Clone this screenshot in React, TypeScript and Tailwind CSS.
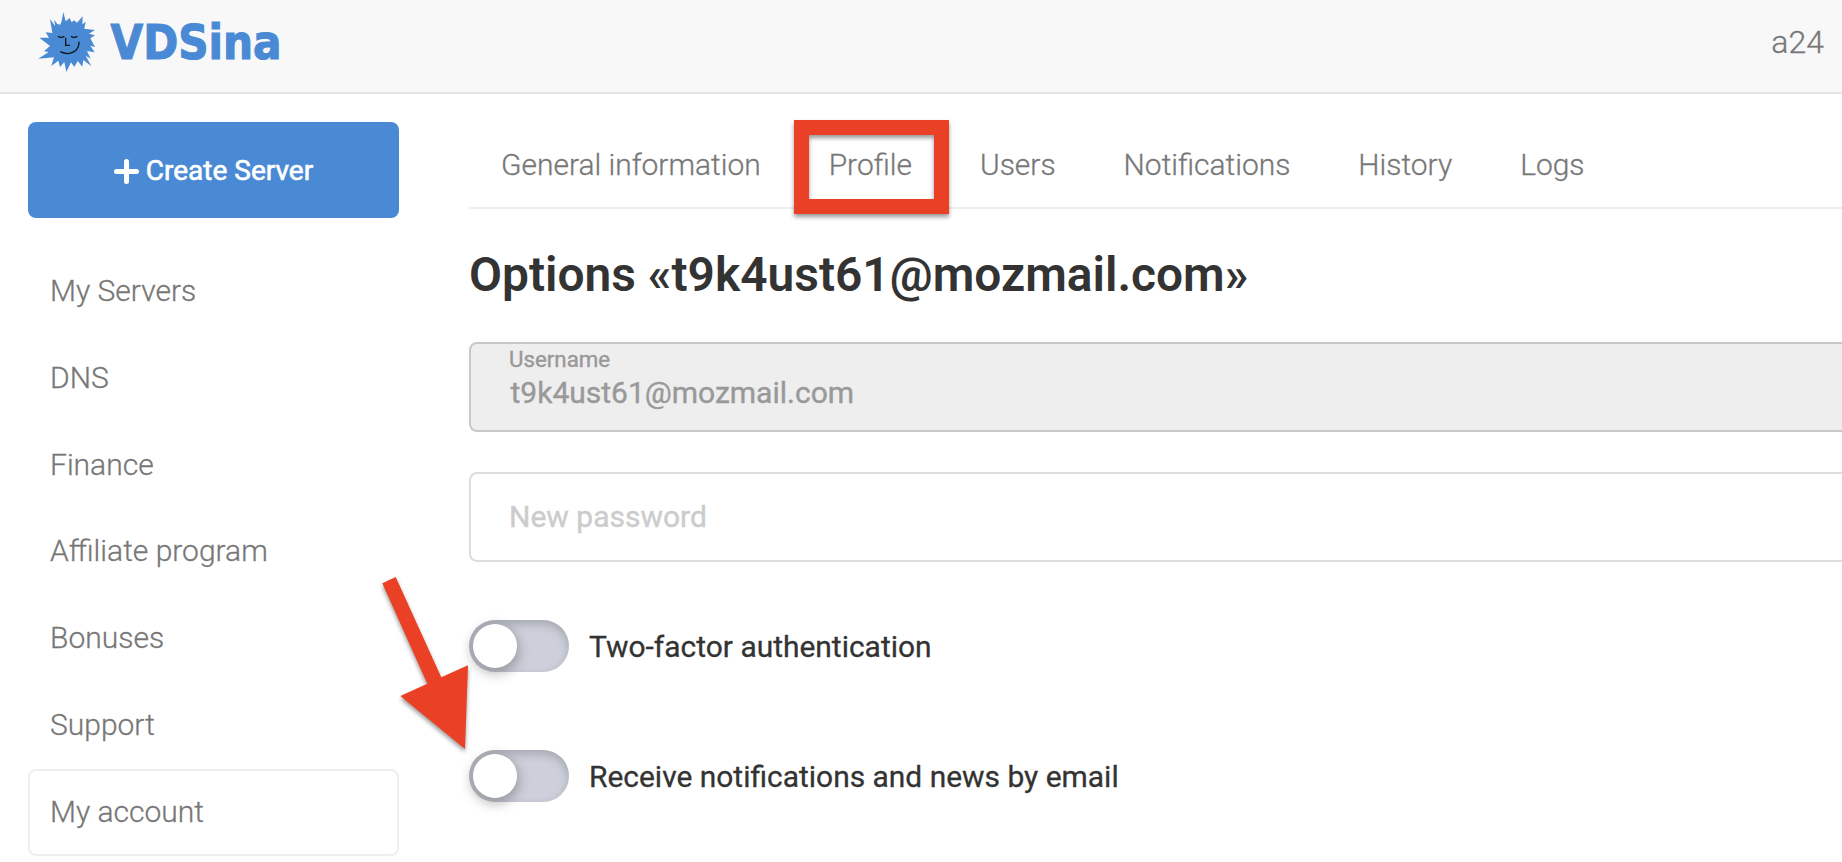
const navItems = ["My Servers", "DNS", "Finance", "Affiliate program", "Bonuses", "Support", "My account"];
const tabs = ["General information", "Profile", "Users", "Notifications", "History", "Logs"];

function Logo() {
  return (
    <svg width="320" height="80" viewBox="0 0 320 80" className="block shrink-0 overflow-visible">
      <g transform="scale(0.33333)">
        <path
          fill="#4a8ad4"
          d="M100 21 L107 49 L119 39 L125 52 L132 46 L141 53 L158 34 L157 58 L167 50 L163 71 L195 75 L177 86 L195 91 L181 100 L195 126 L181 122 L194 142 L171 138 L182 161 L167 152 L184 184 L160 165 L157 185 L143 168 L133 186 L123 172 L109 201 L103 171 L90 186 L85 167 L64 183 L72 157 L25 161 L56 141 L42 139 L60 123 L28 98 L57 98 L47 82 L67 84 L60 42 L76 64 L72 44 L82 57 L91 59 L95 48 Z"
        />
        <g fill="none" stroke="#10151c" strokeWidth="4">
          <path d="M84 94 q9 6 19 0" />
          <path d="M123 94 q9 6 19 0" />
          <path d="M107 98 v23 h13" />
          <path d="M91 140 C118 154 148 140 147 110" />
        </g>
      </g>
      <text
        x="80.5"
        y="54.2"
        textLength="171"
        lengthAdjust="spacingAndGlyphs"
        fill="#4a8ad4"
        stroke="#4a8ad4"
        strokeWidth="1.2"
        className="font-['DejaVu_Sans',sans-serif] text-[48.5px] font-bold"
      >
        VDSina
      </text>
    </svg>
  );
}

function Toggle({ label }: { label: string }) {
  return (
    <label className="flex h-[52px] items-center gap-5">
      <span className="flex h-[52px] w-[100px] items-center rounded-full bg-[#cdd0da] pl-1 shadow-[inset_0_4px_10px_rgba(0,0,0,0.2)]">
        <span className="size-11 rounded-full bg-white shadow-[0_4px_12px_2px_rgba(0,0,0,0.26)]" />
      </span>
      <span className="pt-0.5 text-[29.95px] leading-none whitespace-nowrap text-[#333] [-webkit-text-stroke:0.3px]">
        {label}
      </span>
    </label>
  );
}

export default function App() {
  return (
    <div className="relative h-[862px] w-[1842px] overflow-hidden bg-white font-[Roboto,sans-serif] text-[30px] text-[#777]">
      <header className="flex h-[94px] items-start justify-between border-b-2 border-[#e6e6e6] bg-[#f8f8f8] pt-[5px] pr-[18px] pl-[30px]">
        <Logo />
        <span className="pt-[15px] text-[32px] leading-[44px] font-light [-webkit-text-stroke:0.3px]">a24</span>
      </header>

      <div className="flex">
        <aside className="w-[399px] shrink-0 pt-7 pl-7">
          <button className="flex h-24 w-full items-center justify-center gap-[7px] rounded-lg bg-[#4a8ad4] pt-0.5 text-[28px] text-white [-webkit-text-stroke:0.6px]">
            <svg width="25" height="25" viewBox="0 0 25 25">
              <path d="M12.5 2.5v20M2.5 12.5h20" stroke="white" strokeWidth="5" strokeLinecap="round" />
            </svg>
            Create Server
          </button>
          <nav className="mt-[30px]">
            {navItems.map((item) => (
              <a
                key={item}
                className={`flex h-[86.85px] items-center rounded-lg border-2 pb-0.5 pl-5 font-light [-webkit-text-stroke:0.3px] ${
                  item === "My account" ? "border-[#eee]" : "border-transparent"
                }`}
              >
                {item}
              </a>
            ))}
          </nav>
        </aside>

        <main className="ml-[70px] w-[1400px] shrink-0">
          <div className="flex h-[115px] gap-1 border-b-2 border-[#eee] pt-[51px]">
            {tabs.map((tab) => (
              <a
                key={tab}
                className="px-8 text-[29.95px] leading-[40px] font-light whitespace-nowrap [-webkit-text-stroke:0.3px]"
              >
                {tab}
              </a>
            ))}
          </div>
          <h1 className="mt-[38px] text-[47.9px] leading-[56px] font-semibold whitespace-nowrap text-[#333]">
            Options «t9k4ust61@mozmail.com»
          </h1>
          <div className="mt-[39px] h-[90px] rounded-lg border-2 border-[#c8c8c8] bg-[#eee] pt-[3px] pl-[38px] text-[#999] [-webkit-text-stroke:0.4px]">
            <div className="text-[22.3px] leading-[24px]">Username</div>
            <div className="pt-0.5 pl-[1.5px] text-[30px] leading-[40px]">t9k4ust61@mozmail.com</div>
          </div>
          <div className="mt-10 flex h-[90px] items-center rounded-lg border-2 border-[#ddd] pb-0.5 pl-[38px] text-[#ccc] [-webkit-text-stroke:0.4px]">
            New password
          </div>
          <div className="mt-[58px] flex flex-col gap-[78px]">
            <Toggle label="Two-factor authentication" />
            <Toggle label="Receive notifications and news by email" />
          </div>
        </main>
      </div>

      {/* Annotations laid over the page */}
      <svg className="pointer-events-none absolute inset-0 drop-shadow-[0_3px_2px_rgba(0,0,0,0.4)]" width="1842" height="862">
        <rect x="801.5" y="127.5" width="140" height="79" fill="none" stroke="#ea4025" strokeWidth="15" />
        <path
          d="M382.3 583.3 L395.7 577 L441.3 677.3 L468 665.3 L465 749 L400.3 696 L427.3 683.7 Z"
          fill="#ea4025"
        />
      </svg>
    </div>
  );
}
